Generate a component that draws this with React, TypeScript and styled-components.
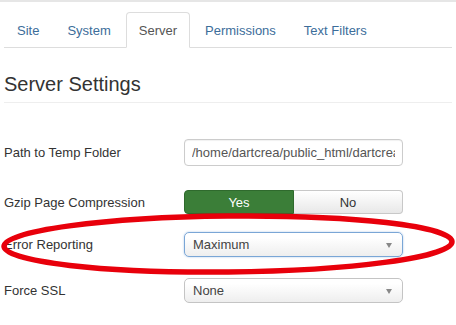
import styled, { createGlobalStyle } from 'styled-components';

const GlobalStyle = createGlobalStyle`
  body {
    margin: 0;
    background: #fff;
    font-family: "Liberation Sans", Arial, sans-serif;
  }
`;

const Page = styled.div`
  position: relative;
  width: 456px;
  height: 325px;
  overflow: hidden;
  border-top: 2px solid #e6e6e6;
  box-sizing: border-box;
`;

const Content = styled.div`
  padding: 0 4px;
`;

const TabBar = styled.ul`
  display: flex;
  list-style: none;
  margin: 10px 0 0 0;
  padding: 0;
  border-bottom: 1px solid #ddd;
`;

const Tab = styled.li<{ $active?: boolean }>`
  height: 36px;
  display: flex;
  align-items: center;
  padding: 0 12px;
  margin-right: 2px;
  margin-bottom: -1px;
  font-size: 13px;
  color: ${(p) => (p.$active ? '#555' : '#3c6d9a')};
  background: ${(p) => (p.$active ? '#fff' : 'transparent')};
  border: 1px solid ${(p) => (p.$active ? '#ddd' : 'transparent')};
  border-bottom-color: ${(p) => (p.$active ? '#fff' : 'transparent')};
  border-radius: 4px 4px 0 0;
  box-sizing: border-box;
`;

const Heading = styled.h2`
  margin: 24px 0 0 0;
  padding-bottom: 6px;
  font-size: 20px;
  line-height: 24px;
  font-weight: normal;
  color: #333;
  border-bottom: 1px solid #eee;
`;

const Row = styled.div<{ $gap: number }>`
  display: flex;
  align-items: center;
  margin-top: ${(p) => p.$gap}px;
`;

const Label = styled.label`
  width: 180px;
  flex-shrink: 0;
  font-size: 13px;
  color: #333;
`;

const TextInput = styled.input`
  width: 219px;
  height: 27px;
  box-sizing: border-box;
  border: 1px solid #ccc;
  border-radius: 4px;
  padding: 0 7px;
  margin: 0;
  font-family: "Liberation Sans", Arial, sans-serif;
  font-size: 13px;
  color: #555;
  outline: none;
  box-shadow: inset 0 1px 1px rgba(0, 0, 0, 0.06);
`;

const ToggleGroup = styled.div`
  display: flex;
  width: 219px;
  height: 24px;
`;

const Toggle = styled.div<{ $on?: boolean; $side: 'left' | 'right' }>`
  flex: 1;
  display: flex;
  align-items: center;
  justify-content: center;
  font-size: 13px;
  box-sizing: border-box;
  color: ${(p) => (p.$on ? '#fff' : '#333')};
  background: ${(p) =>
    p.$on ? '#3b7e38' : 'linear-gradient(#ffffff, #e8e8e8)'};
  border: 1px solid ${(p) => (p.$on ? '#2f6a2d' : '#c8c8c8')};
  border-radius: ${(p) => (p.$side === 'left' ? '4px 0 0 4px' : '0 4px 4px 0')};
  ${(p) => p.$side === 'right' && 'border-left: none;'}
`;

const Select = styled.div<{ $focus?: boolean }>`
  position: relative;
  width: 219px;
  height: 25px;
  box-sizing: border-box;
  border: 1px solid ${(p) => (p.$focus ? '#7aa6d6' : '#c4c4c4')};
  border-radius: 5px;
  padding: 0 8px;
  display: flex;
  align-items: center;
  font-size: 13px;
  color: #444;
  background: linear-gradient(#ffffff 20%, #eeeeee 100%);
  box-shadow: ${(p) => (p.$focus ? '0 0 2px rgba(82, 140, 210, 0.5)' : 'none')};
`;

const Arrow = styled.span`
  position: absolute;
  right: 10px;
  top: 50%;
  margin-top: -2px;
  width: 0;
  height: 0;
  border-left: 3px solid transparent;
  border-right: 3px solid transparent;
  border-top: 5px solid #888;
`;

const Overlay = styled.svg`
  position: absolute;
  left: 0;
  top: -2px;
  pointer-events: none;
`;

export default function App() {
  return (
    <>
      <GlobalStyle />
      <Page>
        <Content>
          <TabBar>
            <Tab>Site</Tab>
            <Tab>System</Tab>
            <Tab $active>Server</Tab>
            <Tab>Permissions</Tab>
            <Tab>Text Filters</Tab>
          </TabBar>
          <Heading>Server Settings</Heading>
          <Row $gap={36}>
            <Label>Path to Temp Folder</Label>
            <TextInput readOnly value="/home/dartcrea/public_html/dartcrea/tmp" />
          </Row>
          <Row $gap={24}>
            <Label>Gzip Page Compression</Label>
            <ToggleGroup>
              <Toggle $on $side="left">Yes</Toggle>
              <Toggle $side="right">No</Toggle>
            </ToggleGroup>
          </Row>
          <Row $gap={18}>
            <Label>Error Reporting</Label>
            <Select $focus>
              Maximum
              <Arrow />
            </Select>
          </Row>
          <Row $gap={21}>
            <Label>Force SSL</Label>
            <Select>
              None
              <Arrow />
            </Select>
          </Row>
        </Content>
        <Overlay width="456" height="325" viewBox="0 0 456 325">
          <ellipse
            cx="228"
            cy="244"
            rx="224"
            ry="28"
            fill="none"
            stroke="#e8000b"
            strokeWidth="5.5"
            transform="rotate(-0.6 228 244)"
          />
        </Overlay>
      </Page>
    </>
  );
}
